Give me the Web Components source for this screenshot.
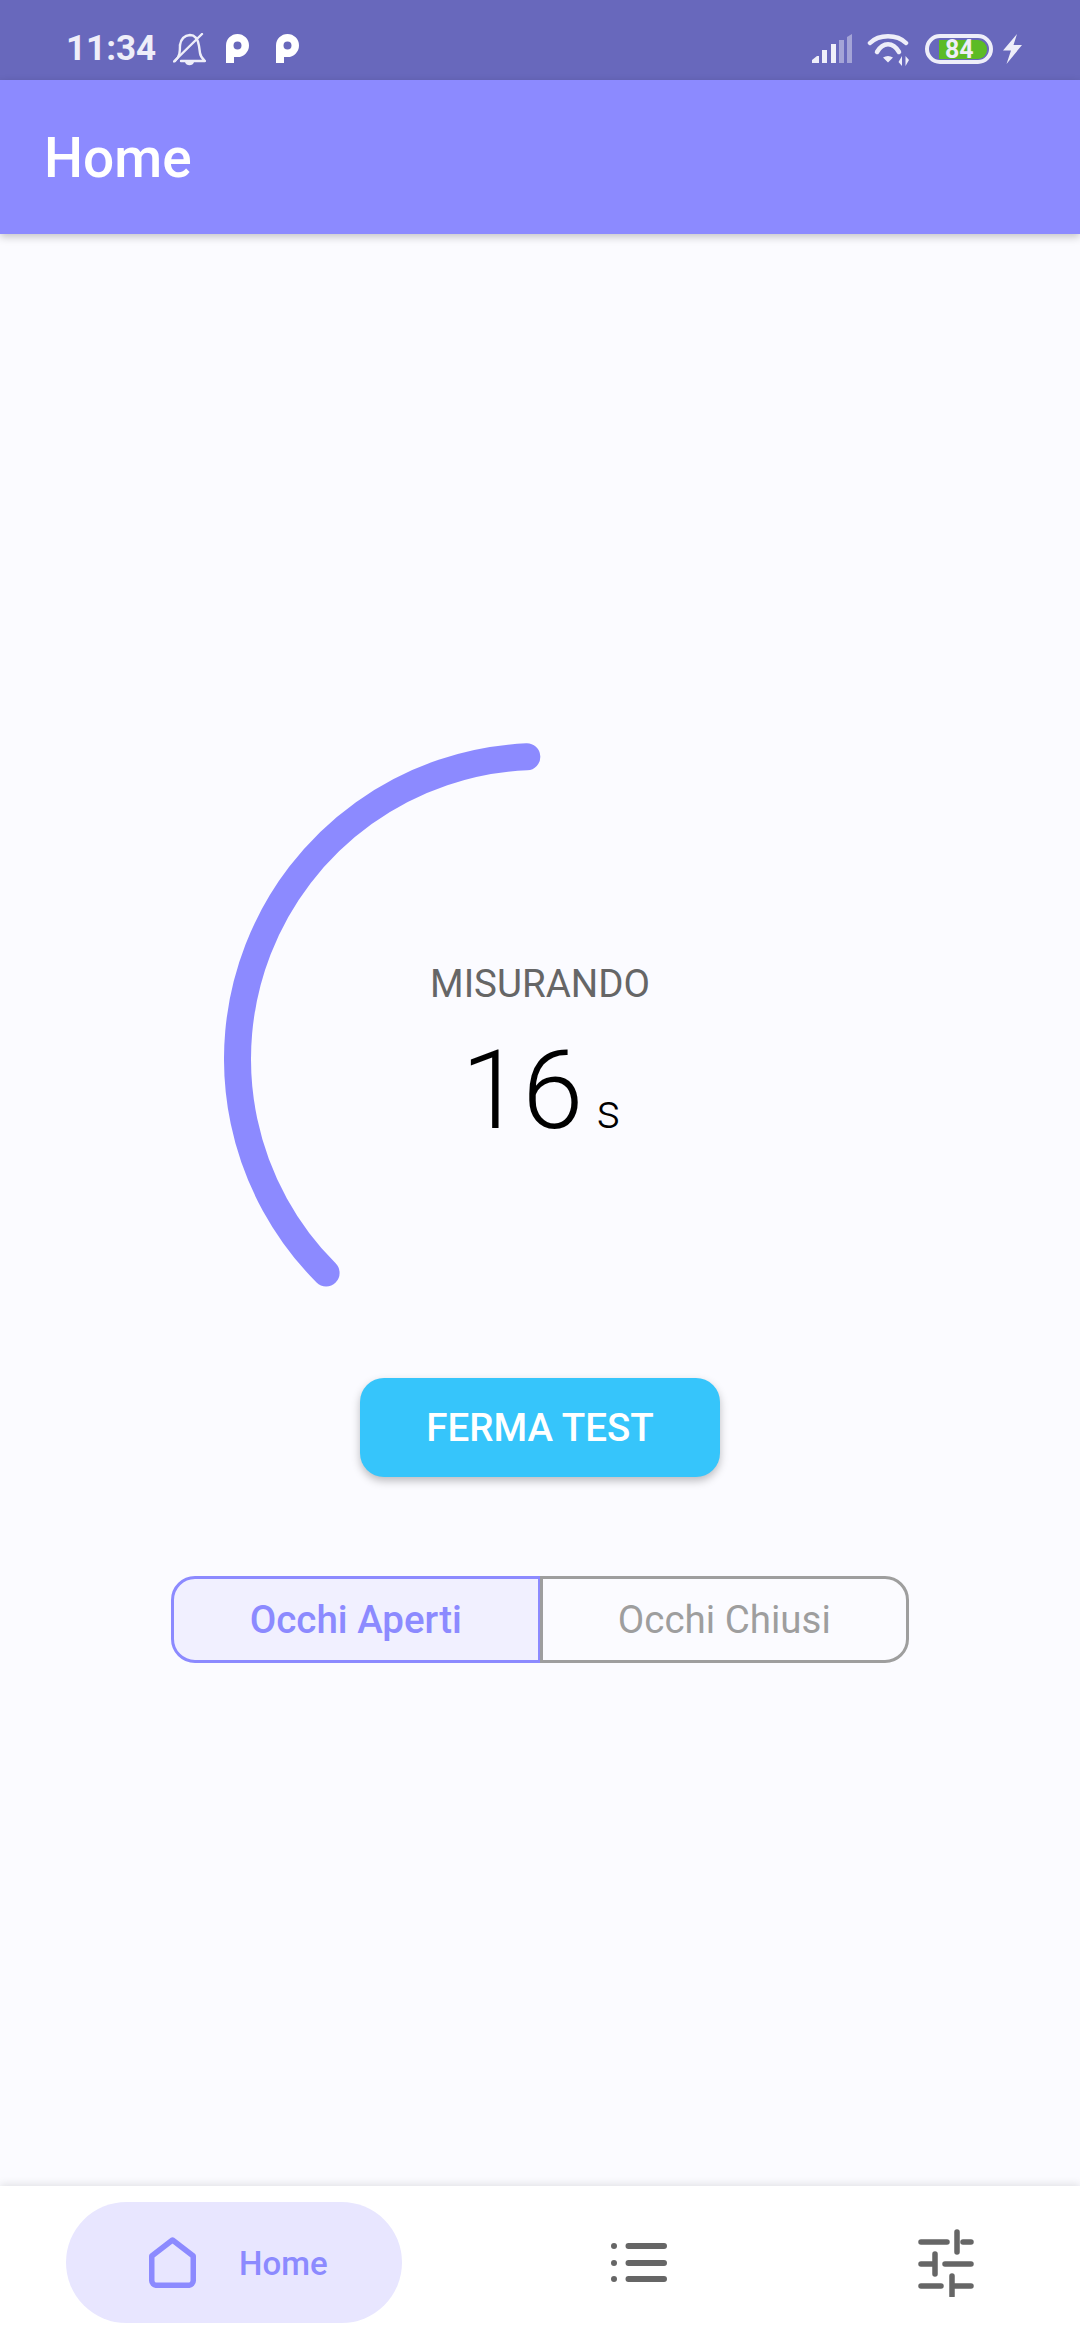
<!DOCTYPE html>
<html>
<head>
<meta charset="utf-8">
<title>Home</title>
<style>
    html, body {
        margin: 0;
        padding: 0;
        width: 1080px;
        height: 2340px;
        overflow: hidden;
        background-color: #fbfbff;
        font-family: Roboto, "Liberation Sans", sans-serif;
    }
    body {
        display: flex;
        flex-direction: column;
    }
    main {
        flex: 1;
        display: flex;
        flex-direction: column;
        align-items: center;
        padding-top: 509px;
    }
</style>
</head>
<body>
<status-bar time="11:34" battery="84"></status-bar>
<app-bar>Home</app-bar>
<main>
    <gauge-meter label="MISURANDO" value="16" unit="s"></gauge-meter>
    <action-button>FERMA TEST</action-button>
    <segment-toggle first="Occhi Aperti" second="Occhi Chiusi"></segment-toggle>
</main>
<nav-bar></nav-bar>

<script>
class StatusBar extends HTMLElement {
    constructor() {
        super();

        this.attachShadow({ mode: "open" });

        this.shadowRoot.innerHTML = `
            <style>
                :host {
                    display: flex;
                    align-items: center;
                    height: 80px;
                    padding: 18px 58px 0 66px;
                    box-sizing: border-box;
                    background-color: #6868bc;
                    color: #eeeef9;
                    flex: none;
                }
                svg { display: block; flex: none; }
                .time {
                    font-size: 35px;
                    font-weight: 700;
                    margin-right: 17px;
                    line-height: 50px;
                }
                .p { margin-left: 20px; }
                .p + .p { margin-left: 26px; }
                .spacer { flex: 1; }
                .wifi { margin-left: 15px; }
                .battery {
                    display: flex;
                    align-items: center;
                    margin-left: 15px;
                    width: 68px;
                    height: 30px;
                    box-sizing: border-box;
                    border: 4px solid #eeeef9;
                    border-radius: 15px;
                    padding: 0 3px 0 10px;
                }
                .level {
                    width: 48px;
                    height: 19px;
                    flex: none;
                    background-color: #5cbb25;
                    border-radius: 0 9px 9px 0;
                    font-size: 25px;
                    font-weight: 700;
                    line-height: 19px;
                    padding-left: 6px;
                    box-sizing: border-box;
                    color: #eeeef9;
                    white-space: nowrap;
                }
                .bolt { margin-left: 10px; }
            </style>
            <span class="time">${this.getAttribute("time")}</span>
            <svg width="33" height="33" viewBox="0 0 33 33" fill="none" stroke="#eeeef9" stroke-width="2.400" stroke-linejoin="round" stroke-linecap="round">
                <path d="M7 12C8 6 11 2.500 17 2C23 2 25 7 26 13L27 20C27.500 24 30 26 32 28H8"></path>
                <path d="M7 12C7 18 7 24 2 28"></path>
                <path d="M1 28.500 29 1"></path>
                <path d="M12 29h9c-.6 2.400-2.400 3.200-4.500 3.200s-3.900-.8-4.500-3.200z" fill="#eeeef9" stroke="none"></path>
            </svg>
            <svg class="p" width="24" height="30" viewBox="0 0 24 30" fill="#fff">
                <path fill-rule="evenodd" d="M0 29V11.500A11.500 11.500 0 1 1 11.500 23H8v6zM11.500 7.500a4 4 0 1 0 0 8 4 4 0 0 0 0-8z"></path>
            </svg>
            <svg class="p" width="24" height="30" viewBox="0 0 24 30" fill="#fff">
                <path fill-rule="evenodd" d="M0 29V11.500A11.500 11.500 0 1 1 11.500 23H8v6zM11.500 7.500a4 4 0 1 0 0 8 4 4 0 0 0 0-8z"></path>
            </svg>
            <span class="spacer"></span>
            <svg width="40" height="30" viewBox="0 0 40 30" fill="#eeeef9">
                <path d="M0 29v-3l5-4h2v7z"></path>
                <rect x="10" y="16" width="5" height="13"></rect>
                <rect x="19" y="10" width="5" height="19"></rect>
                <rect x="27" y="6" width="5" height="23" opacity=".45"></rect>
                <path d="M35 3l5-3v29h-5z" opacity=".45"></path>
            </svg>
            <svg class="wifi" width="43" height="36" viewBox="0 0 43 36" fill="none" stroke="#eeeef9" stroke-width="4.500" stroke-linecap="round">
                <path d="M3 12C12 3 30 3 39 12"></path>
                <path d="M10 21C16 10.700 26 10.700 32 21"></path>
                <path d="M16 26.500Q21 23.500 26 26.500L21 31.500z" fill="#eeeef9" stroke="none"></path>
                <path d="M35 25v10l-3.500-4zM38.500 35V25l3.500 4z" fill="#eeeef9" stroke="none"></path>
            </svg>
            <span class="battery"><span class="level">${this.getAttribute("battery")}</span></span>
            <svg class="bolt" width="19" height="30" viewBox="0 0 19 30" fill="#eeeef9">
                <path d="M14 0 0 16.500h8L3.500 30 19 11h-8.500z"></path>
            </svg>
        `;
    }
}

class AppBar extends HTMLElement {
    constructor() {
        super();

        this.attachShadow({ mode: "open" });

        this.shadowRoot.innerHTML = `
            <style>
                :host {
                    display: flex;
                    align-items: center;
                    height: 154px;
                    padding: 2px 0 0 44px;
                    box-sizing: border-box;
                    background-color: #8c8aff;
                    color: #fff;
                    font-size: 55px;
                    font-weight: 500;
                    box-shadow: 0 3px 8px rgba(0, 0, 0, .22);
                    flex: none;
                    position: relative;
                }
            </style>
            <slot></slot>
        `;
    }
}

class GaugeMeter extends HTMLElement {
    constructor() {
        super();

        this.attachShadow({ mode: "open" });

        this.shadowRoot.innerHTML = `
            <style>
                :host {
                    display: flex;
                    flex-direction: column;
                    align-items: center;
                    justify-content: center;
                    position: relative;
                    width: 632px;
                    height: 632px;
                    padding: 18px 0 4px;
                    box-sizing: border-box;
                    flex: none;
                }
                svg {
                    position: absolute;
                    left: 0;
                    top: 0;
                    width: 632px;
                    height: 632px;
                }
                .label {
                    font-size: 38.500px;
                    color: #666;
                    line-height: 46px;
                }
                .reading {
                    display: flex;
                    align-items: baseline;
                    color: #000;
                    font-weight: 300;
                    margin-top: 24px;
                    margin-left: 2px;
                    line-height: 120px;
                }
                .value {
                    font-size: 110px;
                }
                .unit {
                    font-size: 48px;
                    margin-left: 13px;
                }
            </style>
            <svg viewBox="0 0 632 632">
                <path d="M102.100 529.900A302.500 302.500 0 0 1 302.800 13.800" fill="none" stroke="#8c8aff" stroke-width="27" stroke-linecap="round"></path>
            </svg>
            <span class="label">${this.getAttribute("label")}</span>
            <span class="reading">
                <span class="value">${this.getAttribute("value")}</span>
                <span class="unit">${this.getAttribute("unit")}</span>
            </span>
        `;
    }
}

class ActionButton extends HTMLElement {
    constructor() {
        super();

        this.attachShadow({ mode: "open" });

        this.shadowRoot.innerHTML = `
            <style>
                :host {
                    display: flex;
                    align-items: center;
                    justify-content: center;
                    width: 360px;
                    height: 99px;
                    margin-top: 3px;
                    background-color: #36c5fb;
                    border-radius: 24px;
                    color: #fff;
                    font-size: 38.500px;
                    font-weight: 500;
                    box-shadow: 0 4px 8px rgba(0, 0, 0, .25);
                    flex: none;
                }
            </style>
            <slot></slot>
        `;
    }
}

class SegmentToggle extends HTMLElement {
    constructor() {
        super();

        this.attachShadow({ mode: "open" });

        this.shadowRoot.innerHTML = `
            <style>
                :host {
                    display: flex;
                    width: 738px;
                    height: 87px;
                    margin-top: 99px;
                    font-size: 38.500px;
                    flex: none;
                }
                div {
                    flex: 1;
                    display: flex;
                    align-items: center;
                    justify-content: center;
                    box-sizing: border-box;
                    border: 3px solid;
                }
                .on {
                    color: #8c8aff;
                    border-color: #8c8aff;
                    background-color: #f1f0ff;
                    border-radius: 24px 0 0 24px;
                    font-weight: 500;
                }
                .off {
                    color: #9e9e9e;
                    border-color: #9e9e9e;
                    border-radius: 0 24px 24px 0;
                    margin-left: -1px;
                }
            </style>
            <div class="on">${this.getAttribute("first")}</div>
            <div class="off">${this.getAttribute("second")}</div>
        `;
    }
}

class NavTab extends HTMLElement {
    constructor() {
        super();

        this.attachShadow({ mode: "open" });

        this.shadowRoot.innerHTML = `
            <style>
                :host {
                    display: flex;
                    align-items: center;
                    justify-content: center;
                    height: 121px;
                    width: 120px;
                    color: #666;
                    flex: none;
                }
                :host([active]) {
                    justify-content: flex-start;
                    width: 336px;
                    padding-left: 83px;
                    box-sizing: border-box;
                    background-color: #e8e6ff;
                    border-radius: 60.500px;
                    color: #8c8aff;
                }
                .label {
                    font-size: 33px;
                    font-weight: 500;
                    margin-left: 43px;
                    padding-top: 2px;
                }
                ::slotted(svg) { display: block; }
            </style>
            <slot></slot>
            ${this.hasAttribute("label") ? `<span class="label">${this.getAttribute("label")}</span>` : ""}
        `;
    }
}

class NavBar extends HTMLElement {
    constructor() {
        super();

        this.attachShadow({ mode: "open" });

        this.shadowRoot.innerHTML = `
            <style>
                :host {
                    display: flex;
                    align-items: flex-start;
                    gap: 177px;
                    height: 154px;
                    padding: 16px 0 0 66px;
                    box-sizing: border-box;
                    background-color: #fff;
                    box-shadow: 0 -2px 8px rgba(0, 0, 0, .1);
                    flex: none;
                    position: relative;
                }
                .last { margin-left: 10px; }
            </style>
            <nav-tab active label="Home">
                <svg width="47" height="51" viewBox="0 0 47 51" fill="none" stroke="#8c8aff" stroke-width="5.500" stroke-linejoin="round">
                    <path d="M23.500 3 2.750 19v24.500a4.700 4.700 0 0 0 4.700 4.800h32.100a4.700 4.700 0 0 0 4.700-4.800V19z"></path>
                </svg>
            </nav-tab>
            <nav-tab>
                <svg width="56" height="40" viewBox="0 0 56 40" stroke="#666" stroke-width="6" stroke-linecap="round" fill="#666">
                    <circle cx="3" cy="3" r="3" stroke="none"></circle>
                    <circle cx="3" cy="20" r="3" stroke="none"></circle>
                    <circle cx="3" cy="36" r="3" stroke="none"></circle>
                    <path d="M17.500 3H53M17.500 20H53M17.500 36H53"></path>
                </svg>
            </nav-tab>
            <nav-tab class="last">
                <svg width="56" height="68" viewBox="0 0 56 68" stroke="#666" stroke-width="5.500" stroke-linecap="round" fill="none">
                    <path d="M3 13H29M39 3V23M45 13H53"></path>
                    <path d="M3 35H15M17 25V45M27 35H53"></path>
                    <path d="M3 57H23M34 47V67M34 57H53"></path>
                </svg>
            </nav-tab>
        `;
    }
}

customElements.define("status-bar", StatusBar);
customElements.define("app-bar", AppBar);
customElements.define("gauge-meter", GaugeMeter);
customElements.define("action-button", ActionButton);
customElements.define("segment-toggle", SegmentToggle);
customElements.define("nav-tab", NavTab);
customElements.define("nav-bar", NavBar);
</script>
</body>
</html>
